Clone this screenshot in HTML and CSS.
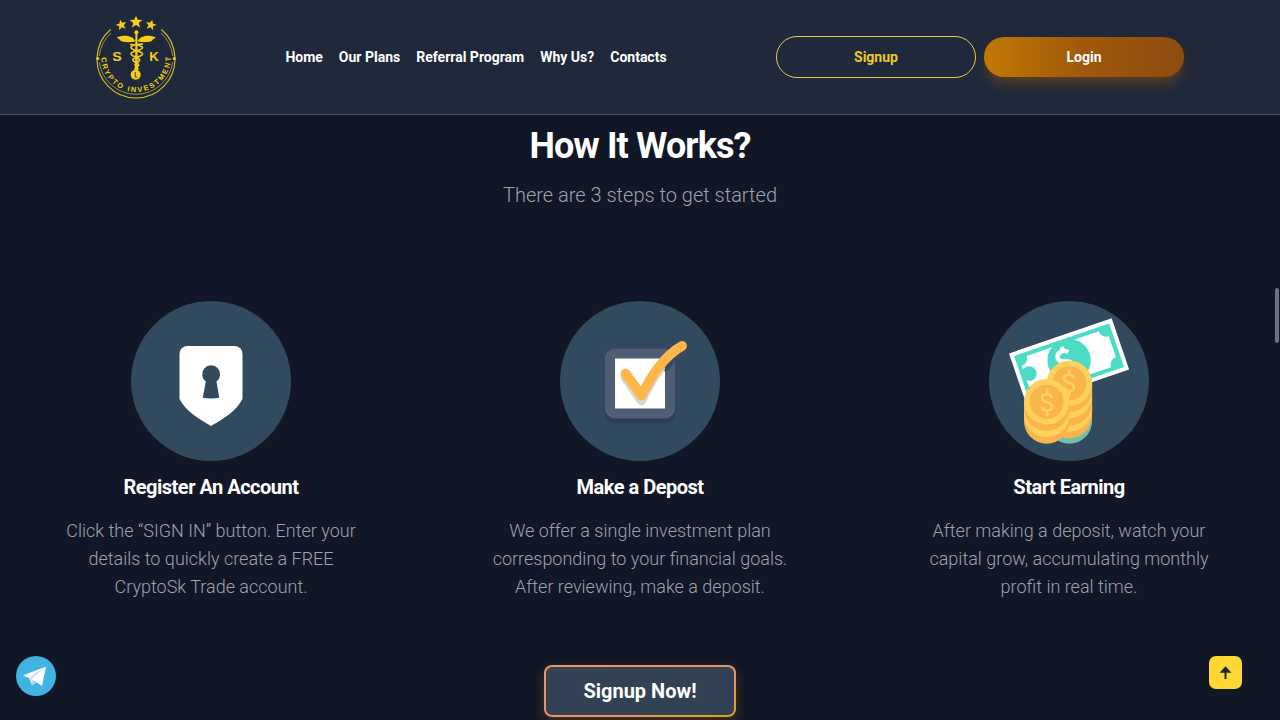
FILE: index.html
```html
<!DOCTYPE html>
<html lang="en">
<head>
<meta charset="utf-8">
<title>CryptoSk Trade</title>
<link rel="stylesheet" href="styles.css">
</head>
<body>
<header class="header">
  <a class="logo" aria-label="SK Crypto Investment">
    <svg width="80" height="100" viewBox="10 0 80 100" fill="#f3cf1c">
      <g fill="none" stroke="#d9be28">
        <path d="M24.500 23.500A39 39 0 1 0 75.500 23.500" stroke-width="1.100"/>
        <path d="M25 27A37 37 0 0 0 13.200 50M13.300 56A37 37 0 0 0 86.700 56M86.800 50A37 37 0 0 0 75 27" stroke-width=".7"/>
      </g>
      <path id="star" d="M50 9.700l1.700 4.100 4.700.2-3.700 2.900 1.400 4.600L50 18.900l-4.100 2.600 1.400-4.600-3.700-2.900 4.700-.2z"/>
      <use href="#star" transform="translate(35.300 18.800) rotate(-14) scale(.85) translate(-50 -15.800)"/>
      <use href="#star" transform="translate(65 18.800) rotate(14) scale(.85) translate(-50 -15.800)"/>
      <circle cx="11.800" cy="52.600" r="1.500"/><circle cx="88.200" cy="52.600" r="1.500"/>
      <path d="M49 34.500C46 29 37 28.500 30.500 31.600q3 1.300 4.300 3.400 2 1 4.600 1 4 .5 9.600-.5zM52 34.500c3-5.500 12-6 18-2.900q-3 1.300-4.300 3.400-2 1-4.600 1-4 .5-9.100-.5z"/>
      <circle cx="50.400" cy="26.300" r="2"/>
      <path d="M49.400 27h2l.3 38h-2.600z"/>
      <path d="M57 38c-4 .3-11 .2-12 3.200-.8 3.300 12 3.500 11.500 7-.5 3-10 2.500-9.500 5.800.4 2.700 6.500 2.700 5.500 5.500-.6 1.800-4 2-3.700 4M44 38.500c5 .2 12 .2 12.500 3.200.4 3-11.500 3-11.500 6 0 3.300 9 3 8.500 6.300-.4 2.700-5.500 3-4.300 5.500.8 1.800 3 2 2.800 4" fill="none" stroke="#f3cf1c" stroke-width="1.700"/>
      <circle cx="49.700" cy="68.800" r="5"/>
      <path d="M49.200 66v5.100h2" fill="none" stroke="#1f2a3b" stroke-width=".9"/>
      <text x="31" y="55" class="logo-letter" textLength="9.500" lengthAdjust="spacingAndGlyphs" text-anchor="middle">S</text>
      <text x="68" y="55" class="logo-letter" textLength="9.500" lengthAdjust="spacingAndGlyphs" text-anchor="middle">K</text>
      <path id="ring" d="M15.400 51.500A34.600 34.600 0 1 0 84.600 51.500" fill="none"/>
      <text class="logo-ring"><textPath href="#ring" textLength="109">CRYPTO INVESTMENT</textPath></text>
    </svg>
  </a>
  <nav class="nav"><a>Home</a><a>Our Plans</a><a>Referral Program</a><a>Why Us?</a><a>Contacts</a></nav>
  <div class="actions">
    <a class="btn btn-outline">Signup</a>
    <a class="btn btn-solid">Login</a>
  </div>
</header>
<main class="main">
  <h2 class="title">How It Works?</h2>
  <p class="subtitle">There are 3 steps to get started</p>
  <section class="steps">
    <article class="step">
      <svg width="160" height="160" viewBox="0 0 160 160">
        <circle cx="80" cy="80" r="80" fill="#324a5e"/>
        <path d="M56.500 45h47a8 8 0 0 1 8 8v45C105 110 94 117 80 125 66 117 55 110 48.500 98V53a8 8 0 0 1 8-8z" fill="#fff"/>
        <path d="M74.800 80.500a9 9 0 1 1 10.700 0l2.700 16.200q-8.200 1.600-16.400 0z" fill="#324a5e"/>
      </svg>
      <h3 class="step-title">Register An Account</h3>
      <p class="step-text">Click the “SIGN IN” button. Enter your<br>details to quickly create a FREE<br>CryptoSk Trade account.</p>
    </article>
    <article class="step">
      <svg width="160" height="160" viewBox="0 0 160 160">
        <circle cx="80" cy="80" r="80" fill="#324a5e"/>
        <rect x="45" y="52.500" width="70" height="70" rx="10" fill="#2b4054"/>
        <rect x="45" y="47.500" width="70" height="70" rx="10" fill="#4f5d75"/>
        <path d="M55 57.500h50v50H55z" fill="#fff"/>
        <path d="M105 65.500Q113 55.500 122 49.500" fill="none" stroke="#3c4960" stroke-width="9.500" stroke-linecap="round"/>
        <path d="M65.500 76.500L81.500 99.500Q91 79 100.200 67.500" fill="none" stroke="#d5d6db" stroke-width="9.500" stroke-linecap="round" stroke-linejoin="round"/>
        <path d="M65.500 72.500L81.500 94.500C92 74 104 55 122 45" fill="none" stroke="#ffb74a" stroke-width="9.800" stroke-linecap="round" stroke-linejoin="round"/>
      </svg>
      <h3 class="step-title">Make a Depost</h3>
      <p class="step-text">We offer a single investment plan<br>corresponding to your financial goals.<br>After reviewing, make a deposit.</p>
    </article>
    <article class="step">
      <svg width="160" height="160" viewBox="0 0 160 160">
        <circle cx="80" cy="80" r="80" fill="#324a5e"/>
        <g transform="translate(20 52.500) rotate(-18.900)">
          <path d="M0 0h108.500v54H0z" fill="#fff"/>
          <path d="M4 4h100.500v46H4z" fill="#4cdbc4"/>
          <path d="M16 8h76a8 8 0 0 0 8 8v22a8 8 0 0 0-8 8H16a8 8 0 0 0-8-8V16a8 8 0 0 0 8-8z" fill="#fff"/>
          <circle cx="12.800" cy="25.500" r="7.300" fill="#4cdbc4"/>
          <circle cx="54.600" cy="26" r="21.700" fill="#4cdbc4"/>
          <path d="M56.500 18c-4-5-12-3-12 2.500 0 6 12 4 12 10M52 11v6" fill="none" stroke="#fff" stroke-width="4.300"/>
        </g>
        <g>
          <circle cx="80.400" cy="120" r="22.700" fill="#74bead"/>
          <path d="M57.700 82h45.400v30H57.700z" fill="#ffd05b"/>
          <circle cx="80.400" cy="114.500" r="22.700" fill="#f9b54c"/>
          <path d="M57.700 104h45.400v4a22.700 22.700 0 0 1-45.400 0z" fill="#ffd05b"/>
          <path d="M57.700 96h45.400v6a22.700 22.700 0 0 1-45.400 0z" fill="#f9b54c"/>
          <path d="M57.700 90h45.400v4.500a22.700 22.700 0 0 1-45.400 0z" fill="#ffd05b"/>
          <path d="M57.700 84h45.400v4a22.700 22.700 0 0 1-45.400 0z" fill="#f9b54c"/>
          <circle cx="80.400" cy="82.200" r="22.700" fill="#ffd05b"/>
          <circle cx="80.400" cy="82.200" r="17" fill="#f9b54c"/>
          <path id="dollar" d="M84.700 76.200C82.400 72.200 75 72.600 75 77.400c0 5.400 10 3.100 10 8.600 0 5.100-7.800 5.200-10.200.9M80.100 69.500v4M80.100 90v4.500" fill="none" stroke="#ffd05b" stroke-width="2.600" stroke-linecap="round"/>
        </g>
        <g>
          <path d="M35 100h45.400v20a22.700 22.700 0 0 1-45.400 0z" fill="#f9b54c"/>
          <path d="M35 106h45.400v7.500a22.700 22.700 0 0 1-45.400 0z" fill="#ffd05b"/>
          <path d="M35 100h45.400v7a22.700 22.700 0 0 1-45.400 0z" fill="#f9b54c"/>
          <circle cx="57.700" cy="100.800" r="22.700" fill="#ffd05b"/>
          <circle cx="57.700" cy="100.800" r="17" fill="#f9b54c"/>
          <use href="#dollar" transform="translate(-22 19.600)"/>
        </g>
      </svg>
      <h3 class="step-title">Start Earning</h3>
      <p class="step-text">After making a deposit, watch your<br>capital grow, accumulating monthly<br>profit in real time.</p>
    </article>
  </section>
  <a class="cta"><span class="cta-label">Signup Now!</span></a>
</main>
<a class="telegram" aria-label="Telegram">
  <svg width="40" height="40" viewBox="0 0 40 40">
    <circle cx="20" cy="20" r="20" fill="#40b3e0"/>
    <path d="M7 19.600L30 10.500 15.500 23z" fill="#fff"/>
    <path d="M12.800 21.500L30 10.500 16 29.500z" fill="#d2e4f0"/>
    <path d="M16 29.500L16.500 24 21 26.500z" fill="#b5cfe4"/>
    <path d="M30 10.500L26 30 15.800 23z" fill="#fff"/>
  </svg>
</a>
<a class="to-top" aria-label="Back to top">
  <svg width="33" height="33" viewBox="0 0 33 33"><path d="M16.500 10.300l6 6.400h-5v6.200h-2v-6.200h-5z" fill="#1d2a3a"/></svg>
</a>
<div class="scroll-thumb"></div>
</body>
</html>
```
FILE: styles.css
```css
* { box-sizing: border-box; }
body {
  margin: 0;
  height: 720px;
  overflow: hidden;
  background: #111726;
  color: #fff;
  font-family: Roboto, "Liberation Sans", sans-serif;
}
h2, h3, p { margin: 0; }
svg { display: block; }
.header {
  display: flex;
  align-items: center;
  justify-content: space-between;
  height: 115px;
  padding: 0 96px;
  background: #1f293b;
  border-bottom: 1px solid #4b5563;
}
.logo { width: 80px; margin-bottom: 2px; }
.logo-letter { font: bold 12.5px "Liberation Sans", sans-serif; }
.logo-ring { font: bold 7.3px "Liberation Sans", sans-serif; }
.nav {
  display: flex;
  gap: 16px;
  font-size: 14px;
  line-height: 20px;
  font-weight: 700;
}
.actions { display: flex; align-items: center; gap: 8px; }
.btn {
  width: 200px;
  border-radius: 21px;
  font-size: 14px;
  line-height: 20px;
  font-weight: 700;
  text-align: center;
}
.btn-outline { padding: 10px 0; border: 1px solid #e5c93a; color: #f0ca20; }
.btn-solid {
  padding: 10px 0;
  background: linear-gradient(90deg, #c27803, #9f580a 50%, #8e4b10);
  box-shadow: 0 8px 14px -3px rgba(159, 88, 10, .55);
}
.main { display: flex; flex-direction: column; align-items: center; padding-top: 11px; }
.title { font-size: 36px; line-height: 40px; font-weight: 700; letter-spacing: -.9px; }
.subtitle {
  margin-top: 15px;
  font-size: 20px;
  line-height: 28px;
  font-weight: 300;
  color: #9ca3af;
}
.steps {
  display: grid;
  grid-template-columns: repeat(3, 309px);
  gap: 120px;
  margin-top: 92px;
}
.step { display: flex; flex-direction: column; align-items: center; }
.step-title {
  margin-top: 12px;
  font-size: 20px;
  line-height: 28px;
  font-weight: 700;
  letter-spacing: -.5px;
}
.step-text {
  margin-top: 16px;
  font-size: 18px;
  line-height: 28px;
  font-weight: 300;
  text-align: center;
  white-space: nowrap;
  color: #9ca3af;
}
.cta {
  width: 192px;
  height: 52px;
  margin-top: 64px;
  padding: 2px;
  border-radius: 8px;
  background: linear-gradient(160deg, #e8956a, #e59265 65%, #d2a51c);
  box-shadow: 0 4px 12px rgba(194, 100, 3, .35);
}
.cta-label {
  display: block;
  border-radius: 6px;
  background: #334155;
  font-size: 20px;
  line-height: 48px;
  font-weight: 700;
  text-align: center;
}
.telegram { position: fixed; left: 16px; top: 656px; }
.to-top {
  position: fixed;
  left: 1209px;
  top: 656px;
  border-radius: 7px;
  background: #fdd835;
}
.scroll-thumb {
  position: fixed;
  right: 1px;
  top: 288px;
  width: 4px;
  height: 55px;
  border-radius: 2px;
  background: #6b7280;
}
```
